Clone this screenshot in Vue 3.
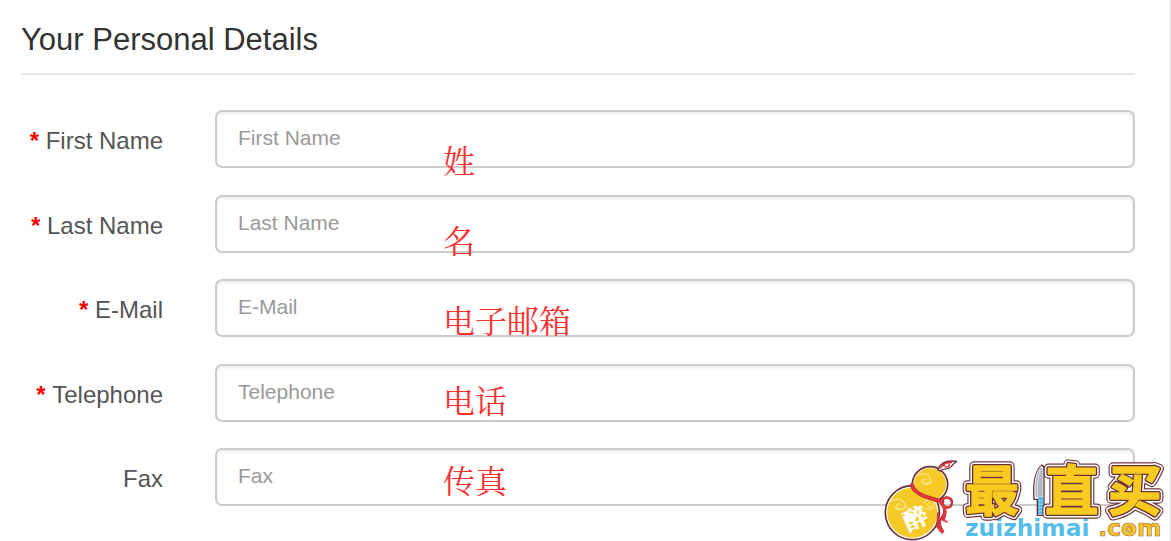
<script setup>
const fields = [
  { id: 'firstname', label: 'First Name', type: 'text', required: true, note: '姓' },
  { id: 'lastname', label: 'Last Name', type: 'text', required: true, note: '名' },
  { id: 'email', label: 'E-Mail', type: 'email', required: true, note: '电子邮箱' },
  { id: 'telephone', label: 'Telephone', type: 'tel', required: true, note: '电话' },
  { id: 'fax', label: 'Fax', type: 'text', required: false, note: '传真' },
]
</script>

<template>
  <main class="page">
    <form class="details">
      <h1 class="title">Your Personal Details</h1>
      <div class="fields">
        <div v-for="f in fields" :key="f.id" class="row">
          <label class="label" :for="f.id"><b v-if="f.required" class="star">* </b>{{ f.label }}</label>
          <input :id="f.id" class="control" :type="f.type" :name="f.id" :placeholder="f.label" />
        </div>
      </div>
    </form>

    <div class="notes">
      <span v-for="f in fields" :key="f.id" class="note">{{ f.note }}</span>
    </div>

    <svg class="logo" viewBox="18 18 870 255" role="img" aria-label="最直买 zuizhimai.com">
      <defs>
        <g id="brand">
          <text x="270" y="182">最</text>
          <text x="509" y="182">直</text>
          <text x="698" y="182">买</text>
        </g>
      </defs>

      <!-- gourd -->
      <g class="gourd-edge">
        <circle cx="112" cy="188" r="81" />
        <circle cx="165" cy="103" r="53" />
      </g>
      <g class="gourd-fill">
        <circle cx="112" cy="188" r="75" />
        <circle cx="165" cy="103" r="48" />
      </g>
      <g class="swirl">
        <path d="M128 76c18-12 40 0 38 16-2 12-19 13-22 3-2-8 8-11 11-5M138 94c8 14 26 8 34 0" />
        <path d="M48 154c16-12 40-6 42 10 1 15-20 18-25 7-3-9 9-14 13-6M58 170c9 15 29 10 39-2" />
        <path d="M146 160c4-14 28-15 32-2 3 13-15 18-20 8-2-7 6-10 9-5M148 170c8 13 24 8 32 0" />
      </g>
      <text class="seal" x="86" y="232" transform="rotate(-24 120 208)">醉</text>
      <path class="stem-edge" d="M189 60c6-20 26-30 57-26-11 4-12 14-23 20-12 6-20 0-27 9z" />
      <path class="stem-line" d="M195 56c8-13 22-20 37-18M207 48c-1-9 13-14 16-6 3 7-10 12-14 6" />
      <path class="ribbon-edge" d="M111 105c4 24 44 39 91 49" />
      <path class="ribbon" d="M111 105c4 24 44 39 91 49" />
      <path class="tassel-edge" d="M197 154c17-21 37-9 33 8-5 17-24 12-30-4M196 157c17 18 13 36 3 48-9 12-5 25 5 39M202 160c14 20 9 35 3 50M190 190l-3 39 14 18" />
      <path class="tassel" d="M197 154c17-21 37-9 33 8-5 17-24 12-30-4M196 157c17 18 13 36 3 48-9 12-5 25 5 39M202 160c14 20 9 35 3 50M190 190l-3 39 14 18M202 208l14 8" />

      <text class="domain" x="270" y="257">zuizhimai</text>
      <text class="domain suffix" x="670" y="257">.com</text>
      <path class="coin" d="M762 229l8 9-8 9-8-9z" />

      <!-- knife -->
      <path class="knife-edge" d="M500 43c7 2 9 7 9 16v139h-24v-48h-10c-3-46 1-86 25-107z" />
      <path class="knife-white" d="M499 47c5 2 6 6 6 12v135h-16v-48h-10c-3-42 0-79 20-99z" />
      <path class="blade" d="M498 51c4 2 5 5 5 10v79h-21c-3-36 0-70 16-89z" />
      <path class="shine" d="M496 60c-8 20-10 48-8 76" />
      <path class="handle" d="M489 141h15v52h-15z" />
      <path class="rivets" d="M494 151v35M499 151v35" />

      <!-- brand lettering, from the outer outline inwards -->
      <use class="brand outer" href="#brand" />
      <use class="brand white" href="#brand" />
      <use class="brand inner" href="#brand" />
      <use class="brand face" href="#brand" />
    </svg>
  </main>
</template>

<style>
body {
  margin: 0;
  background: #fff;
}
</style>

<style scoped>
.page {
  position: relative;
  box-sizing: border-box;
  min-height: 100vh;
  padding: 21px 34px 34px 21px;
  border-right: 2px solid #f0f0f0;
  background: #fff;
  font-family: "Liberation Sans", Arial, "Noto Sans CJK SC", sans-serif;
  overflow: hidden;
}
.title {
  margin: 0 0 35px;
  padding: 0 0 14px;
  border-bottom: 2px solid #e5e5e5;
  color: #333;
  font-size: 31px;
  font-weight: 400;
  line-height: 38px;
}
.fields {
  display: flex;
  flex-direction: column;
  justify-content: space-between;
  min-height: 396px;
}
.row {
  display: grid;
  grid-template-columns: 142px 1fr;
  column-gap: 52px;
}
.label {
  padding-top: 17px;
  color: #555;
  font-size: 24px;
  line-height: 28px;
  text-align: right;
  white-space: nowrap;
}
.star {
  color: #f00;
}
.control {
  box-sizing: border-box;
  width: 100%;
  height: 58px;
  padding: 0 21px 2px;
  border: 2px solid #ccc;
  border-radius: 7px;
  outline: 0;
  background: #fff;
  box-shadow: inset 0 2px 3px rgba(0, 0, 0, 0.08);
  color: #555;
  font: 21px/30px "Liberation Sans", Arial, sans-serif;
}
.control::placeholder {
  color: #999;
  opacity: 1;
}
.notes {
  position: absolute;
  top: 139px;
  left: 443px;
  display: grid;
  grid-auto-rows: 40px;
  row-gap: 40px;
  pointer-events: none;
}
.note {
  color: #ff3030;
  font: 400 32px/40px "Noto Serif CJK SC", "Noto Sans CJK SC", serif;
  white-space: nowrap;
}
.logo {
  position: absolute;
  top: 456px;
  left: 881px;
  width: 290px;
  height: 85px;
}
.gourd-edge {
  fill: #fff;
  stroke: #692f38;
  stroke-width: 5;
}
.gourd-fill {
  fill: #f7c926;
}
.swirl {
  fill: none;
  stroke: #fff0b5;
  stroke-width: 3;
}
.seal {
  fill: #fff;
  stroke: #fff;
  stroke-width: 2;
  font: 700 72px "Noto Serif CJK SC", "Noto Sans CJK SC", serif;
}
.stem-edge {
  fill: #fff;
  stroke: #692f38;
  stroke-width: 4;
}
.stem-line {
  fill: none;
  stroke: #e5282c;
  stroke-width: 4;
}
.ribbon-edge,
.ribbon,
.tassel-edge,
.tassel {
  fill: none;
  stroke-linecap: round;
}
.ribbon-edge {
  stroke: #692f38;
  stroke-width: 12;
}
.ribbon {
  stroke: #f5333a;
  stroke-width: 9;
}
.tassel-edge {
  stroke: #692f38;
  stroke-width: 7;
}
.tassel {
  stroke: #f5333a;
  stroke-width: 5;
}
.brand {
  font: 700 162px "Noto Sans CJK SC", sans-serif;
  stroke-linejoin: round;
}
.outer {
  fill: #692f38;
  stroke: #692f38;
  stroke-width: 28;
}
.white {
  fill: #fff;
  stroke: #fff;
  stroke-width: 21;
}
.inner {
  fill: #692f38;
  stroke: #692f38;
  stroke-width: 12;
}
.face {
  fill: #f9cb20;
  stroke: #f9cb20;
  stroke-width: 4;
}
.knife-edge {
  fill: #692f38;
}
.knife-white {
  fill: #fff;
}
.blade {
  fill: #aeb7c0;
}
.shine {
  fill: none;
  stroke: #d4dbe1;
  stroke-width: 4;
}
.handle {
  fill: #4bb9e9;
}
.rivets {
  fill: none;
  stroke: #fff;
  stroke-width: 3;
  stroke-dasharray: 3 7;
}
.domain {
  fill: #56bdea;
  font: 700 70px "DejaVu Sans", sans-serif;
}
.suffix {
  fill: #f7c926;
  stroke: #a56a35;
  stroke-width: 2;
}
.coin {
  fill: #f7c926;
  stroke: #a56a35;
  stroke-width: 2;
}
</style>
